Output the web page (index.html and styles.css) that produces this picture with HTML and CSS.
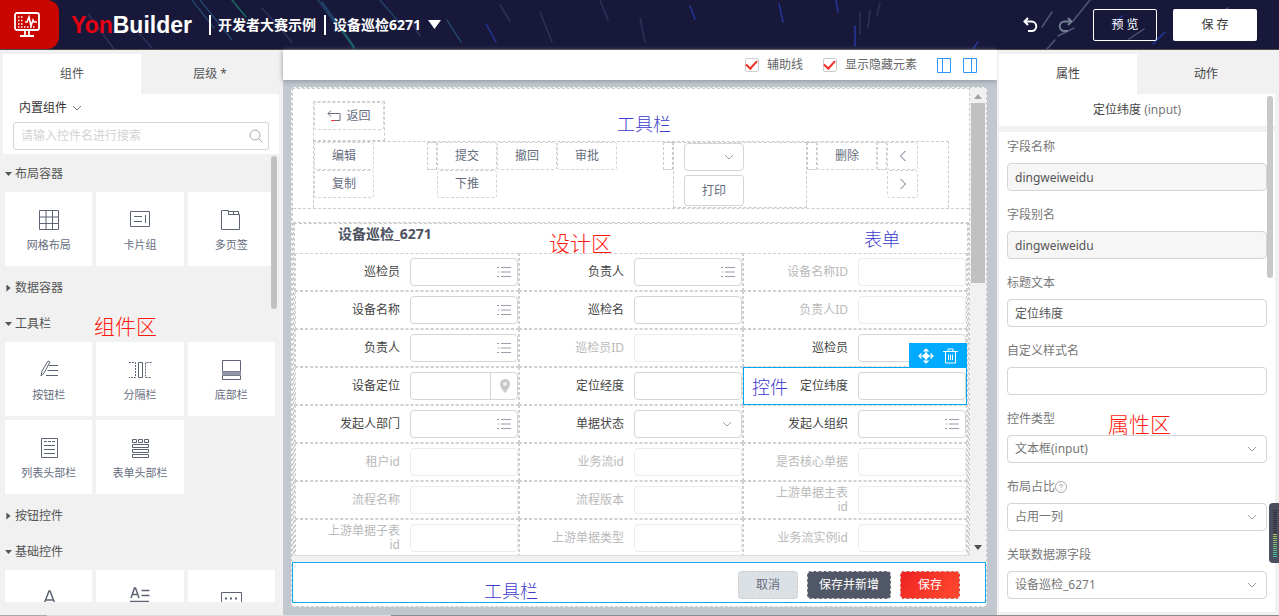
FILE: index.html
```html
<!DOCTYPE html>
<html lang="zh-CN">
<head>
<meta charset="utf-8">
<title>YonBuilder</title>
<link rel="stylesheet" href="styles.css">
</head>
<body>
<svg class="sprite" aria-hidden="true">
  <symbol id="chevron" viewBox="0 0 10 10"><path d="M1 3l4 4 4-4" fill="none" stroke="currentColor"/></symbol>
  <symbol id="list" viewBox="0 0 14 12"><path d="M4 1.5h10M4 6h10M4 10.500h10M0 1.500h2M1 6h1.500M0 10.500h2" fill="none" stroke="currentColor"/></symbol>
</svg>
<div class="app">
  <header class="header">
    <svg class="streaks" viewBox="0 0 1279 49" preserveAspectRatio="none" aria-hidden="true">
      <g fill="none" stroke-width="1.500" stroke-linecap="round">
        <path stroke="#23436b" d="M192 0l22 28M200 0l32 40M318 0l18 24M322 2l32 44M380 0l22 26M447 20l14 22"/>
        <path stroke="#176a62" d="M232 0l14 17M340 28l14 20"/>
        <path stroke="#30305a" d="M88 14l26 35M136 30l16 18M262 8l30 34M410 20l10 16M500 5l10 16M540 12l12 30M600 0l8 20M640 18l5 24M860 12v22M870 10l-2 18M880 3l-3 12"/>
        <path stroke="#24369a" d="M779 4l4 18M855 26v20M836 0l2 12M978 42l-5 7M486 24l10 18M690 6l5 13M1165 32l-12 12M1122 16l-10 9"/>
        <path stroke="#54547a" d="M1052 12l-10 15M1090 0l-17 21M1074 28l-16 8M1055 40l-8 9M1144 29l-15 10M1228 8l-9 6"/>
      </g>
    </svg>
    <div class="brand-mark">
      <svg width="26" height="26" viewBox="0 0 26 26" fill="none" stroke="#fff" stroke-width="1.800">
        <rect x="1" y="1" width="24" height="17" rx="2"/><path d="M11 18v5M15 18v5M6 24h14"/><path d="M11 10h2l2-5 2 9 2-6 1 2h3" stroke-width="1.600"/><path d="M4 5h6M4 8.500h6M4 12h5M4 15h18" stroke-dasharray="1.500 1.500" stroke-width="1.500"/>
      </svg>
    </div>
    <div class="logo"><span class="logo-red">Yon</span>Builder</div>
    <nav class="crumbs">
      <span class="crumb">开发者大赛示例</span>
      <button class="crumb page-switch" type="button">设备巡检6271
        <svg width="13" height="9" viewBox="0 0 13 9"><path d="M0 0h13L6.500 9z" fill="#fff"/></svg>
      </button>
    </nav>
    <div class="header-actions">
      <button class="icon-button" type="button" aria-label="撤销"><svg width="15" height="16" viewBox="0 0 15 16" fill="none" stroke="#fff" stroke-width="2"><path d="M5 1L1.500 4.500 5 8M2 4.500h6.500a4.800 4.800 0 010 9.600H5"/></svg></button>
      <button class="icon-button faded" type="button" aria-label="重做"><svg width="15" height="16" viewBox="0 0 15 16" fill="none" stroke="#708090" stroke-width="2"><path d="M10 1l3.500 3.500L10 8M13 4.500H6.500a4.800 4.800 0 000 9.600H10"/></svg></button>
      <button class="preview" type="button">预 览</button>
      <button class="save" type="button">保 存</button>
    </div>
  </header>

  <main class="workspace">
    <aside class="palette">
      <div class="tabs"><button class="tab active" type="button">组件</button><button class="tab" type="button">层级 *</button></div>
      <div class="search-panel">
        <button class="source" type="button">内置组件 <svg width="10" height="10"><use href="#chevron"/></svg></button>
        <label class="search"><input type="text" placeholder="请输入控件名进行搜索" aria-label="搜索控件">
          <svg width="14" height="14" viewBox="0 0 14 14" fill="none" stroke="#aaa"><circle cx="6" cy="6" r="5"/><path d="M9.500 9.500L13.500 13.500"/></svg></label>
      </div>
      <div class="catalog">
        <h3 class="group open">布局容器</h3>
        <div class="cards">
          <button class="card" type="button"><svg viewBox="0 0 24 24"><path d="M2.500 2.500h19v19h-19zM2.500 9h19M2.500 15.500h19M9 2.500v19M15.500 2.500v19"/></svg>网格布局</button>
          <button class="card" type="button"><svg viewBox="0 0 24 24"><path d="M2.500 3.500h19v15h-19zM6 8.500h8M6 13.500h8M17.500 7v8"/></svg>卡片组</button>
          <button class="card" type="button"><svg viewBox="0 0 24 24"><path d="M2.500 2.500h7v4h11v15h-18zM9.500 3.500h10v3M14.500 3.500v3"/></svg>多页签</button>
        </div>
        <h3 class="group">数据容器</h3>
        <h3 class="group open">工具栏</h3>
        <div class="cards">
          <button class="card" type="button"><svg viewBox="0 0 24 24"><path d="M4 18l1-5 6-10 2 1-6 11zM12 7.500h9M10.500 12.500h10.500M9 17.500h12"/></svg>按钮栏</button>
          <button class="card" type="button"><svg viewBox="0 0 24 24"><path d="M10.500 4.500h4v15h-4z"/><path stroke-dasharray="2 1" d="M1 4.500h6.500v15H1M23.500 4.500h-6v15h6"/></svg>分隔栏</button>
          <button class="card" type="button"><svg viewBox="0 0 24 24"><path d="M3.500 2.500h18v11h-18zM3.500 17.500h18v4h-18z"/><path d="M3 15.500h19" stroke-width="4" stroke="#9298a5"/></svg>底部栏</button>
          <button class="card" type="button"><svg viewBox="0 0 24 24"><path d="M4.500 2.500h16v19h-16zM7 9.500h11M7 13.500h11M7 17.500h11"/><path stroke-dasharray="3 1" d="M7 5.500h11"/></svg>列表头部栏</button>
          <button class="card" type="button"><svg viewBox="0 0 24 24"><path d="M4.500 3.500h4v3h-4zM10.500 3.500h4v3h-4zM16.500 3.500h4v3h-4zM4.500 8.500h16v3h-16zM4.500 13.500h16v3h-16zM4.500 18.500h16v3h-16z"/></svg>表单头部栏</button>
        </div>
        <h3 class="group">按钮控件</h3>
        <h3 class="group open">基础控件</h3>
        <div class="cards">
          <button class="card" type="button" aria-label="文本"><svg viewBox="0 0 24 24"><path d="M7 18l5-13h1l5 13M9 14h7" stroke-width="1.500"/></svg></button>
          <button class="card" type="button" aria-label="输入"><svg viewBox="0 0 24 24"><path d="M3 12L6.500 2h1L11 12M4.500 8.500h5M13.500 4.500h8M13.500 9.500h8M2 15.500h19" stroke-width="1.500"/></svg></button>
          <button class="card" type="button" aria-label="多行文本"><svg viewBox="0 0 24 24"><path d="M2.500 6.500h20v14h-20z"/><path d="M6 12.500h13" stroke-dasharray="2 3" stroke-width="2"/></svg></button>
        </div>
      </div>
      <i class="palette-thumb"></i>
      <span class="note red note-palette">组件区</span>
    </aside>

    <section class="designer">
      <div class="options">
        <label class="check"><input type="checkbox" checked>辅助线</label>
        <label class="check"><input type="checkbox" checked>显示隐藏元素</label>
        <button class="icon-button" type="button" aria-label="左侧面板"><svg width="14" height="15" fill="none" stroke="#2f94f5"><path d="M.5.500h13v14H.5zM5.500.500v14"/></svg></button>
        <button class="icon-button" type="button" aria-label="右侧面板"><svg width="14" height="15" fill="none" stroke="#2f94f5"><path d="M.5.500h13v14H.5zM8.500.500v14"/></svg></button>
      </div>
      <div class="stage">
        <div class="frame">
          <div class="viewport">
            <div class="page">
              <div class="toolbar">
                <div class="back"><button class="tool" type="button"><svg width="14" height="12" viewBox="0 0 14 12" fill="none" stroke="#666d7d"><path d="M4 .5L1 3.500l3 3M1 3.500h12v7H8"/><path d="M4 10.500h4" stroke="#f33"/></svg>返回</button></div>
                <div class="tool-row">
                  <div class="stack"><button class="tool" type="button">编辑</button><button class="tool" type="button">复制</button></div>
                  <div class="stack submit-stack"><div class="line"><i class="sep"></i><button class="tool" type="button">提交</button><button class="tool" type="button">撤回</button><button class="tool" type="button">审批</button></div><button class="tool indented" type="button">下推</button></div>
                  <i class="sep"></i>
                  <div class="print-box">
                    <div class="select"><select aria-label="打印模板"><option></option></select><svg width="10" height="10"><use href="#chevron"/></svg></div>
                    <button class="print" type="button">打印</button>
                  </div>
                  <i class="sep"></i><button class="tool" type="button">删除</button><i class="sep"></i>
                  <div class="stack pager"><button class="tool" type="button" aria-label="上一条"><svg width="8" height="12" fill="none" stroke="#666d7d"><path d="M6.500 1l-5 5 5 5"/></svg></button><button class="tool" type="button" aria-label="下一条"><svg width="8" height="12" fill="none" stroke="#666d7d"><path d="M1.500 1l5 5-5 5"/></svg></button></div>
                </div>
                <span class="note blue note-toolbar">工具栏</span>
              </div>
              <form class="form">
                <div class="form-inner">
                  <h2 class="form-title">设备巡检_6271</h2>
                  <div class="fields">
                    <label class="field"><span>巡检员</span><span class="control"><input><svg width="14" height="12"><use href="#list"/></svg></span></label>
                    <label class="field"><span>负责人</span><span class="control"><input><svg width="14" height="12"><use href="#list"/></svg></span></label>
                    <label class="field hidden"><span>设备名称ID</span><span class="control"><input></span></label>
                    <label class="field"><span>设备名称</span><span class="control"><input><svg width="14" height="12"><use href="#list"/></svg></span></label>
                    <label class="field"><span>巡检名</span><span class="control"><input></span></label>
                    <label class="field hidden"><span>负责人ID</span><span class="control"><input></span></label>
                    <label class="field"><span>负责人</span><span class="control"><input><svg width="14" height="12"><use href="#list"/></svg></span></label>
                    <label class="field hidden"><span>巡检员ID</span><span class="control"><input></span></label>
                    <label class="field"><span>巡检员</span><span class="control"><input></span></label>
                    <label class="field"><span>设备定位</span><span class="control"><input><span class="pin"><svg width="10" height="14" viewBox="0 0 10 14"><path d="M5 0a5 5 0 015 5c0 4-5 9-5 9S0 9 0 5a5 5 0 015-5z" fill="#c9c9c9"/><circle cx="5" cy="5" r="2" fill="#eee"/></svg></span></span></label>
                    <label class="field"><span>定位经度</span><span class="control"><input></span></label>
                    <div class="field selected"><label for="latitude">定位纬度</label><span class="control"><input id="latitude"></span>
                      <div class="handles"><button class="icon-button" type="button" aria-label="移动"><svg width="16" height="16" viewBox="0 0 16 16" fill="none" stroke="#fff" stroke-width="1.200"><path d="M8 1v14M1 8h14M5.500 3.500L8 1l2.500 2.500M5.500 12.500L8 15l2.500-2.500M3.500 5.500L1 8l2.500 2.500M12.500 5.500L15 8l-2.500 2.500"/><path d="M8 5l3 3-3 3-3-3z" fill="#fff"/></svg></button><button class="icon-button" type="button" aria-label="删除"><svg width="15" height="16" viewBox="0 0 15 16" fill="none" stroke="#fff"><path d="M0 3.500h15M5 3V1h5v2M2.500 4v11h10V4M5.500 6.500V12M7.500 6.500V12M9.500 6.500V12"/></svg></button></div>
                      <em class="note blue note-control">控件</em></div>
                    <label class="field"><span>发起人部门</span><span class="control"><input><svg width="14" height="12"><use href="#list"/></svg></span></label>
                    <label class="field"><span>单据状态</span><span class="control"><select><option></option></select><svg width="10" height="10"><use href="#chevron"/></svg></span></label>
                    <label class="field"><span>发起人组织</span><span class="control"><input><svg width="14" height="12"><use href="#list"/></svg></span></label>
                    <label class="field hidden"><span>租户id</span><span class="control"><input></span></label>
                    <label class="field hidden"><span>业务流id</span><span class="control"><input></span></label>
                    <label class="field hidden"><span>是否核心单据</span><span class="control"><input></span></label>
                    <label class="field hidden"><span>流程名称</span><span class="control"><input></span></label>
                    <label class="field hidden"><span>流程版本</span><span class="control"><input></span></label>
                    <label class="field hidden"><span>上游单据主表id</span><span class="control"><input></span></label>
                    <label class="field hidden"><span>上游单据子表id</span><span class="control"><input></span></label>
                    <label class="field hidden"><span>上游单据类型</span><span class="control"><input></span></label>
                    <label class="field hidden"><span>业务流实例id</span><span class="control"><input></span></label>
                  </div>
                  <span class="note red note-design">设计区</span>
                  <span class="note blue note-form">表单</span>
                </div>
              </form>
            </div>
            <div class="scrollbar"><svg width="8" height="5"><path d="M4 0l4 5H0z" fill="#a3a3a3"/></svg><i></i><svg width="8" height="5"><path d="M0 0h8L4 5z" fill="#505050"/></svg></div>
          </div>
          <div class="footer">
            <button class="action cancel" type="button">取消</button>
            <button class="action dark" type="button">保存并新增</button>
            <button class="action primary" type="button">保存</button>
            <span class="note blue note-footer">工具栏</span>
          </div>
        </div>
      </div>
    </section>

    <aside class="inspector">
      <div class="tabs"><button class="tab active" type="button">属性</button><button class="tab" type="button">动作</button></div>
      <div class="inspector-title">定位纬度 <small>(input)</small></div>
      <div class="properties">
        <label class="property"><span>字段名称</span><span class="control"><input value="dingweiweidu" readonly></span></label>
        <label class="property"><span>字段别名</span><span class="control"><input value="dingweiweidu" readonly></span></label>
        <label class="property"><span>标题文本</span><span class="control"><input value="定位纬度"></span></label>
        <label class="property"><span>自定义样式名</span><span class="control"><input></span></label>
        <label class="property"><span>控件类型</span><span class="control"><select><option>文本框(input)</option></select><svg width="10" height="10"><use href="#chevron"/></svg></span></label>
        <label class="property"><span>布局占比<svg width="12" height="12" viewBox="0 0 12 12" fill="none" stroke="#aaa"><circle cx="6" cy="6" r="5.500"/><path d="M4.500 5a1.500 1.500 0 113 0c0 1-1.500 1-1.500 2M6 8.500v1"/></svg></span><span class="control"><select><option>占用一列</option></select><svg width="10" height="10"><use href="#chevron"/></svg></span></label>
        <label class="property"><span>关联数据源字段</span><span class="control"><select><option>设备巡检_6271</option></select><svg width="10" height="10"><use href="#chevron"/></svg></span></label>
        <span class="control"><input aria-label="数据源"></span>
      </div>
      <i class="inspector-thumb"></i>
      <div class="meter"><i></i></div>
      <span class="note red note-inspector">属性区</span>
    </aside>
  </main>
  <div class="bottom-line"></div>
</div>
</body>
</html>
```
FILE: styles.css
```css
* { box-sizing: border-box; }
body { margin: 0; font-family: "Noto Sans", "Noto Sans CJK SC", sans-serif; font-size: 12px; line-height: 20px; color: #555; }
button, input, select { font: inherit; color: inherit; margin: 0; }
button { background: none; border: 0; padding: 0; }
i, em { font-style: normal; }
.sprite { position: absolute; width: 0; height: 0; }
.app { height: 100vh; display: grid; grid-template-rows: 50px minmax(0, 1fr) 1px; overflow: hidden; }

.header { position: relative; display: flex; align-items: center; background: #18193a; border-bottom: 1px solid #4b4848; color: #fff; }
.header > * { position: relative; }
.header > .streaks { position: absolute; left: 0; top: 0; width: 100%; height: 100%; }
.brand-mark { display: grid; place-items: center; width: 59px; padding-right: 5px; height: 49px; background: #c90700; border-radius: 0 12px 12px 0; }
.logo { margin-left: 12px; width: 138px; font: bold 23px/48px "Liberation Sans", Arial, sans-serif; }
.logo-red { color: #e60012; }
.crumbs { display: flex; font-size: 14px; font-weight: bold; }
.crumb { border-left: 2px solid #fff; padding-left: 7px; margin-right: 8px; white-space: nowrap; font-size: 14px; font-weight: bold; }
.page-switch { display: flex; align-items: center; gap: 7px; }
.header-actions { display: flex; align-items: center; margin-left: auto; margin-right: 22px; }
.icon-button { display: grid; place-items: center; }
.header-actions .icon-button { margin-right: 20px; }
.preview { width: 64px; height: 32px; border: 1px solid #fff; border-radius: 2px; }
.save { width: 84px; height: 32px; margin-left: 16px; background: #fff; color: #333; border-radius: 2px; }

.workspace { display: grid; grid-template-columns: 283px minmax(0, 1fr) 282px; min-height: 0; }
.palette { position: relative; background: #f1f1f1; padding: 4px 4px 13px 3px; display: flex; flex-direction: column; min-height: 0; }
.tabs { display: grid; grid-template-columns: 1fr 1fr; height: 40px; flex: none; }
.tab.active { background: #fff; }
.search-panel { background: #fff; padding: 4px 10px; height: 60px; flex: none; }
.source { display: flex; align-items: center; gap: 5px; margin-left: 6px; color: #333; }
.source svg { color: #777; }
.search { display: flex; align-items: center; height: 28px; margin-top: 4px; padding: 0 5px 0 7px; border: 1px solid #d5d5d5; border-radius: 3px; }
.search input { flex: 1; min-width: 0; border: 0; padding: 0; outline: 0; }
.search input::placeholder { color: #d3d3d3; }
.catalog { flex: 1; min-height: 0; overflow: hidden; padding: 2px 4px 0 2px; }
.group { display: flex; align-items: center; gap: 3px; margin: 0; height: 36px; font-size: 12px; font-weight: normal; }
.group::before { content: ""; width: 7px; height: 7px; background: #555; clip-path: polygon(20% 0, 80% 50%, 20% 100%); }
.group.open::before { clip-path: polygon(0 20%, 100% 20%, 50% 80%); }
.cards { display: grid; grid-template-columns: repeat(3, 1fr); gap: 4px; margin-bottom: 4px; }
.card { display: flex; flex-direction: column; align-items: center; height: 74px; padding-top: 16px; gap: 3px; background: #fff; font-size: 11px; color: #666d7d; }
.card svg { width: 24px; height: 24px; flex: none; fill: none; stroke: #5c6373; }
.palette-thumb { position: absolute; right: 6px; top: 106px; width: 6px; height: 153px; border-radius: 3px; background: #c1c1c1; }

.designer { display: flex; flex-direction: column; min-width: 0; min-height: 0; background: #c1c8d0; }
.options { position: relative; display: flex; align-items: center; justify-content: flex-end; height: 30px; padding-right: 20px; background: #fff; color: #666; box-shadow: 0 1px 5px #8b929b; }
.check { display: flex; align-items: center; gap: 8px; margin-right: 20px; }
.check input { appearance: none; display: grid; place-items: center; width: 14px; height: 14px; border: 1px solid #ccc; border-radius: 2px; }
.check input:checked::before { content: ""; width: 9px; height: 5px; margin-bottom: 3px; border: solid #f33027; border-width: 0 0 2px 2px; transform: rotate(-48deg); }
.options .icon-button + .icon-button { margin-left: 12px; }
.stage { flex: 1; min-height: 0; padding: 7px 10px 8px 8px; }
.frame { height: 100%; display: flex; flex-direction: column; background: #fff; border: 1px dashed #ccc; }
.viewport { flex: 1; min-height: 0; display: flex; }
.page { flex: 1; min-width: 0; overflow: hidden; border: 1px dashed #ccc; border-bottom: 1px solid #ddd; }
.scrollbar { width: 16px; display: flex; flex-direction: column; align-items: center; padding: 6px 1px; background: #f1f1f1; }
.scrollbar i { width: 14px; height: 180px; margin: 4px 0 auto; background: #c1c1c1; }
.toolbar { position: relative; height: 120px; padding: 12px 20px 0; border-bottom: 1px dashed #ccc; }
.back { width: 72px; height: 40px; border: 1px dashed #ccc; }
.tool { display: flex; align-items: center; justify-content: center; gap: 5px; width: 60px; height: 28px; border: 1px dashed #d3d3d3; border-radius: 3px; color: #666d7d; }
.back .tool { width: 100%; }
.tool-row { display: flex; align-items: flex-start; height: 67px; border: 1px dashed #ccc; border-bottom: 0; }
.submit-stack { margin-left: 53px; margin-right: 46px; }
.line { display: flex; }
.indented { margin-left: 10px; }
.sep { width: 10px; height: 28px; border: 1px dashed #ccc; }
.print-box { width: 134px; height: 66px; padding: 0 10px; border: 1px dashed #ccc; display: flex; flex-direction: column; gap: 4px; }
.print, .select { width: 60px; height: 31px; color: #666d7d; }
.select { height: 28px; }
.print { border: 1px solid #d5d5d5; border-radius: 3px; }
.pager .tool { width: 31px; }
.form { margin-top: 13px; border: 1px dashed #ccc; }
.form-inner { position: relative; border: 1px dashed #ccc; }
.form-title { margin: 0; height: 29px; padding-left: 43px; font-size: 14px; line-height: 20px; color: #4c5261; }
.fields { display: grid; grid-template-columns: repeat(3, 1fr); }
.field { position: relative; display: flex; align-items: center; gap: 10px; height: 38px; border: 1px dashed #d0d0d0; line-height: 14px; color: #444; }
.field > :first-child { width: 104px; flex: none; padding-left: 24px; text-align: right; }
.control, .select { display: grid; align-items: center; flex: 1; min-width: 0; }
.select { flex: none; }
.control > *, .select > * { grid-area: 1 / 1; }
.control input, .control select, .select select { width: 100%; min-width: 0; height: 28px; border: 1px solid #d5d5d5; border-radius: 4px; padding: 0 7px; background: #fff; appearance: none; outline: 0; }
.control > svg, .select > svg { justify-self: end; margin-right: 7px; color: #999fab; pointer-events: none; }
.select > svg, .control select + svg { margin-right: 10px; }
.pin { justify-self: end; display: grid; place-items: center; width: 28px; height: 28px; border-left: 1px solid #d5d5d5; }
.hidden { color: #b9b9b9; }
.hidden input { border-color: #ebebeb; }
.selected { border: 1px solid #00a7f2; }
.handles { position: absolute; right: -1px; bottom: 36px; display: flex; justify-content: center; gap: 9px; width: 58px; height: 25px; background: #00aaff; }
.footer { position: relative; height: 41px; margin: 0 0 3px; display: flex; flex: none; align-items: center; justify-content: flex-end; gap: 9px; padding: 4px 25px 0 0; border: 1px solid #10a9ee; outline: 0; box-shadow: 0 -6px #f1f1f1; }
.viewport { margin-bottom: 6px; }
.action { height: 28px; padding: 0 17px; border: 1px dashed #ccc; border-radius: 4px; }
.cancel { background: #dbe0e5; color: #666d7d; }
.dark { padding: 0 11px; background: #505766; color: #fff; }
.primary { background: linear-gradient(135deg, #ee2223, #ff4b2f); color: #fff; }

.inspector { position: relative; display: flex; flex-direction: column; min-height: 0; padding: 4px 4px 3px 2px; background: #f1f1f1; color: #777; }
.inspector .tabs { color: #444; }
.inspector-title { flex: none; height: 32px; line-height: 32px; text-align: center; background: #fff; color: #444; }
.inspector-title small { font-size: 12px; color: #777; }
.properties { flex: 1; min-height: 0; margin-top: 6px; padding: 5px 8px; background: #fff; overflow: hidden; }
.property { display: flex; flex-direction: column; gap: 6px; height: 54px; margin-bottom: 14px; }
.property > span:first-child { display: flex; align-items: center; height: 20px; }
.property .control { flex: none; }
.property input { color: #555; }
.property input[readonly] { background: #f6f6f6; }
.inspector-thumb { position: absolute; right: 6px; top: 46px; width: 6px; height: 182px; border-radius: 3px; background: #c8c8c8; }
.meter { position: absolute; right: 0; bottom: 52px; width: 10px; height: 60px; padding: 7px 2px 6px 4px; border-radius: 4px 0 0 4px; background: #4b4e5c; }
.meter i { display: block; height: 47px; background: repeating-linear-gradient(transparent 0 1px, #4b4e5c 1px 2px), linear-gradient(#30323b 50%, #a9bd55 50%, #3fc0a4); }

.note { position: absolute; font-size: 18px; line-height: 24px; white-space: nowrap; font-weight: 300; }
.blue { color: #3b3bcd; }
.red { color: #ff1a10; font-size: 21px; }
.note-palette { left: 94px; top: 264px; }
.note-toolbar { left: 324px; top: 23px; }
.note-design { left: 254px; top: 7px; }
.note-form { right: 67px; top: 3px; }
.note-control { left: 8px; top: 7px; }
.note-footer { left: 191px; top: 16px; }
.note-inspector { left: 111px; top: 362px; }
.bottom-line { background: linear-gradient(90deg, #aaa 47px, #ddd 47px 391px, #8c8c8c 391px); }
```
